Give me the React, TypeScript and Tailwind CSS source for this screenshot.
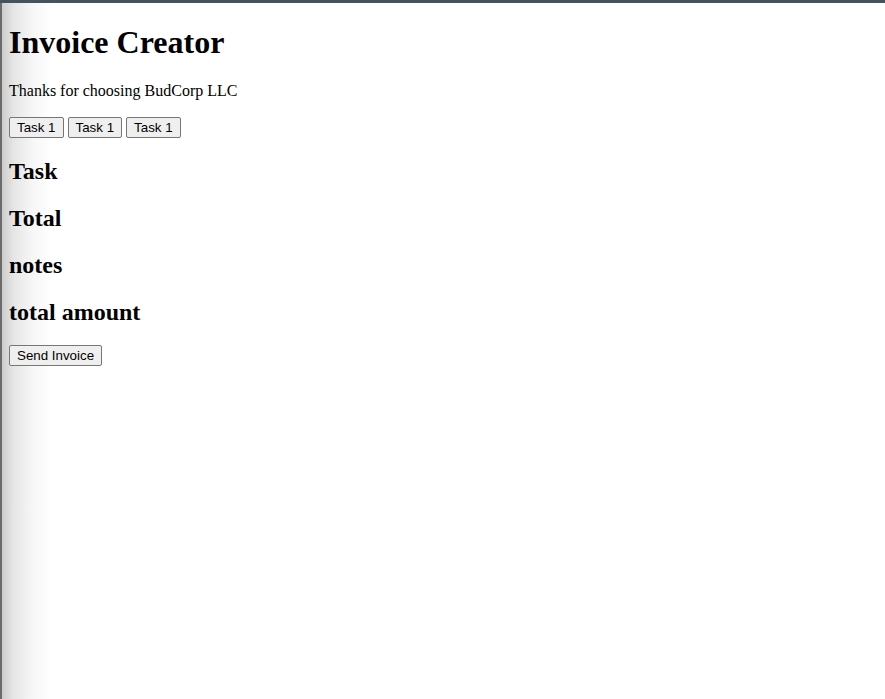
const TASKS = ['Task 1', 'Task 1', 'Task 1']

const SECTIONS = ['Task', 'Total', 'notes']

function Button({ label }: { label: string }) {
  return (
    <button className="inline-block h-[21px] px-[7px] py-[1px] rounded-[2px] border border-[#767676] bg-[#efefef] text-[13.333px] leading-[17px] text-black font-['Liberation_Sans',Arial,sans-serif] align-baseline">
      {label}
    </button>
  )
}

export default function App() {
  return (
    <div className="min-h-[699px] flex flex-col bg-white font-['Liberation_Serif','Times_New_Roman',serif] text-black">
      {/* window chrome strip */}
      <div className="h-[3px] bg-[#47535c] shrink-0" />

      <div className="flex-1 border-l-[2px] border-[#6b6b6b] bg-[linear-gradient(to_right,#cdcdcd_0px,#e6e6e6_12px,#f6f6f6_30px,#ffffff_50px)] px-[7px] pt-[21px]">
        <h1 className="text-[32px] font-bold leading-[37px] mb-[21px]">Invoice Creator</h1>
        <p className="text-[16px] leading-[18px] mb-[17px]">Thanks for choosing BudCorp LLC</p>

        <div className="flex gap-[4px] h-[21px] mb-[20px]">
          {TASKS.map((t, i) => (
            <Button key={i} label={t} />
          ))}
        </div>

        {SECTIONS.map((s) => (
          <h2 key={s} className="text-[24px] font-bold leading-[27px] mb-[20px]">
            {s}
          </h2>
        ))}
        <h2 className="text-[24px] font-bold leading-[27px] mb-[19px]">total amount</h2>

        <div className="flex">
          <Button label="Send Invoice" />
        </div>
      </div>
    </div>
  )
}
